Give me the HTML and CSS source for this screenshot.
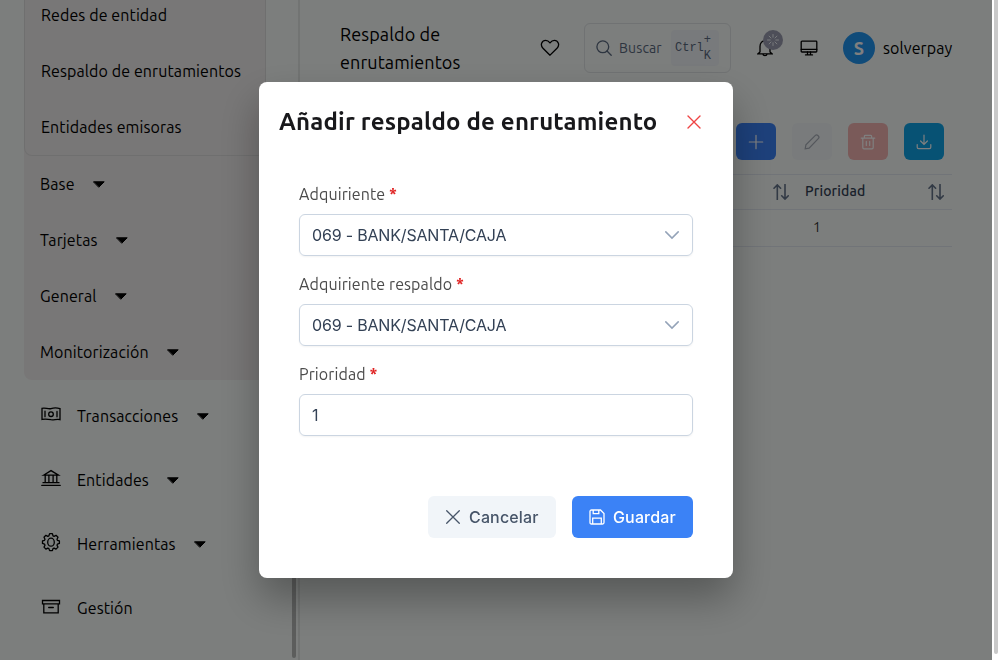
FILE: index.html
```html
<!DOCTYPE html>
<html lang="es">
<head>
<meta charset="utf-8">
<title>Respaldo de enrutamientos</title>
<link rel="stylesheet" href="styles.css">
</head>
<body>
<div class="app">
  <aside class="sidebar">
    <nav class="menu">
      <div class="group">
        <div class="submenu">
          <a class="item">Redes de entidad</a>
          <a class="item">Respaldo de enrutamientos</a>
          <a class="item">Entidades emisoras</a>
        </div>
        <a class="item">Base<svg class="caret" viewBox="0 0 12 7"><path d="M.8.8h10.400L6 6z"/></svg></a>
        <a class="item">Tarjetas<svg class="caret" viewBox="0 0 12 7"><path d="M.8.8h10.400L6 6z"/></svg></a>
        <a class="item">General<svg class="caret" viewBox="0 0 12 7"><path d="M.8.8h10.400L6 6z"/></svg></a>
        <a class="item">Monitorización<svg class="caret" viewBox="0 0 12 7"><path d="M.8.8h10.400L6 6z"/></svg></a>
      </div>
      <a class="item root">
        <svg class="menu-icon" viewBox="0 0 20 20"><path d="M1 4.300C4 3.200 7 5.400 10 4.600c3-.9 6-.8 9 0v11c-3-1-6 .6-9 .1-3-.6-6-.9-9-.3zM4 7.200v5.500M16 7.400v5.400"/><circle cx="10" cy="10.200" r="2.300"/></svg>
        <span>Transacciones</span><svg class="caret" viewBox="0 0 12 7"><path d="M.8.8h10.400L6 6z"/></svg></a>
      <a class="item root">
        <svg class="menu-icon" viewBox="0 0 20 20"><path d="M.8 17.400h18.400M2 14.700h16M2.500 7.200 10 2.600l7.500 4.600zM4.200 7.500v7M7.900 7.500v7M12.100 7.500v7M15.800 7.500v7"/></svg>
        <span>Entidades</span><svg class="caret" viewBox="0 0 12 7"><path d="M.8.8h10.400L6 6z"/></svg></a>
      <a class="item root">
        <svg class="menu-icon" viewBox="0 0 20 20"><path d="M8.600 1.700h2.800l.6 2.100 1.100.5 1.900-1 2 2-1 1.900.4 1.100 2 .6v2.500l-2 .7-.4 1.100 1 1.900-2 2-1.900-1-1.100.5-.6 2H8.600l-.7-2-1.100-.5-1.900 1-1.900-2 1-1.900-.5-1.100-2-.7V8.900l2-.6.5-1.100-1-1.900 1.900-2 1.900 1 1.100-.5z" stroke-linejoin="round"/><ellipse cx="10" cy="10.200" rx="3.300" ry="4"/></svg>
        <span>Herramientas</span><svg class="caret" viewBox="0 0 12 7"><path d="M.8.8h10.400L6 6z"/></svg></a>
      <a class="item root">
        <svg class="menu-icon" viewBox="0 0 20 20"><path d="M1.500 4.500h17v3.300h-17zM2.800 7.800v9h14.400v-9M7.700 11.500h4.600"/></svg>
        <span>Gestión</span></a>
    </nav>
    <div class="side-thumb"></div>
  </aside>

  <main class="main">
    <header class="topbar">
      <h1 class="page-title">Respaldo de<br>enrutamientos</h1>
      <svg class="heart" viewBox="0 0 20 18"><path d="M10 16.200 3 9.200C-.4 5.600 2.200 1.300 5.600 1.300 7.700 1.300 9 2.500 10 3.800c1-1.300 2.300-2.500 4.400-2.500 3.400 0 6 4.300 2.600 7.900z"/></svg>
      <div class="search">
        <svg class="search-icon" viewBox="0 0 16 16"><circle cx="6.800" cy="6.800" r="5.900"/><path d="m11 11 4.200 4.200"/></svg>
        <span class="search-text">Buscar</span>
        <kbd class="shortcut"><span>Ctrl</span><span class="combo">+<br>K</span></kbd>
      </div>
      <div class="bell-wrap">
        <svg class="bell" viewBox="0 0 16 18"><path d="M3 13V7.500C3 4 5 1.800 8 1.800s5 2.200 5 5.700V13l2 1.800H1zM6 15.200c.2 2 3.800 2 4 0"/></svg>
        <span class="badge"><svg viewBox="0 0 12 12"><path d="M6 .5v2.700M6 8.800v2.700M.5 6h2.700M8.800 6h2.700M2.100 2.100 4 4M8 8l1.900 1.900M2.100 9.900 4 8M8 4l1.900-1.900"/></svg></span>
      </div>
      <svg class="monitor" viewBox="0 0 18 16"><rect x="1.200" y="1.200" width="15.600" height="10.800" rx=".8"/><path d="M1.200 9.300h15.600M7.500 12v2.800M10.500 12v2.800M5.500 14.900h7"/></svg>
      <div class="avatar">S</div>
      <span class="user">solverpay</span>
    </header>
    <div class="toolbar">
      <button class="tool add"><svg viewBox="0 0 16 16"><path d="M8 1.300v13.400M1.300 8h13.400"/></svg></button>
      <button class="tool edit"><svg viewBox="0 0 16 16"><path d="m1.200 14.800.7-3.900 9.500-9.500c1.600-1.500 4.600 1.300 3.100 3l-9.400 9.700z"/></svg></button>
      <button class="tool remove"><svg viewBox="0 0 16 16"><path d="M1.200 4.100h13.600M4.400 4V2.200q0-.9.900-.9h5.400q.9 0 .9.900V4M2.800 4.300v9.200q0 1.300 1.200 1.300h8q1.200 0 1.200-1.300V4.300M6.300 7.400v4M9.700 7.400v4"/></svg></button>
      <button class="tool export"><svg viewBox="0 0 16 16"><path d="M8 1v9.200M4.600 7 8 10.400 11.400 7M1.200 10.500v2.800q0 1.400 1.400 1.400h10.800q1.400 0 1.400-1.400v-2.800"/></svg></button>
    </div>
    <div class="table">
      <div class="tr head">
        <div class="cell first"><svg class="sort" viewBox="0 0 16 16"><path d="M4.300 15.600V1M1 4.200 4.300.9l3.300 3.300M12 .4V15M8.700 11.800l3.300 3.300 3.300-3.300"/></svg></div>
        <div class="cell second"><span class="th">Prioridad</span><svg class="sort" viewBox="0 0 16 16"><path d="M4.300 15.600V1M1 4.200 4.300.9l3.300 3.300M12 .4V15M8.700 11.800l3.300 3.300 3.300-3.300"/></svg></div>
      </div>
      <div class="tr body"><div class="value">1</div></div>
    </div>
  </main>
</div>

<div class="mask">
  <section class="dialog" role="dialog">
    <header class="dialog-head">
      <h2 class="dialog-title">Añadir respaldo de enrutamiento</h2>
      <svg class="close" viewBox="0 0 14 14"><path d="m1 1 12 12M13 1 1 13"/></svg>
    </header>
    <form class="form">
      <div class="field">
        <label class="label">Adquiriente <b>*</b></label>
        <div class="control"><span>069 - BANK/SANTA/CAJA</span><svg class="chevron" viewBox="0 0 14 14"><path d="M.8 3.900 7 10.100l6.200-6.200"/></svg></div>
      </div>
      <div class="field">
        <label class="label">Adquiriente respaldo <b>*</b></label>
        <div class="control"><span>069 - BANK/SANTA/CAJA</span><svg class="chevron" viewBox="0 0 14 14"><path d="M.8 3.900 7 10.100l6.200-6.200"/></svg></div>
      </div>
      <div class="field">
        <label class="label">Prioridad <b>*</b></label>
        <div class="control"><span>1</span></div>
      </div>
    </form>
    <footer class="actions">
      <button class="btn cancel"><svg viewBox="0 0 16 16"><path d="m1.700 1.700 12.600 12.600M14.300 1.700 1.700 14.300"/></svg>Cancelar</button>
      <button class="btn save"><svg viewBox="0 0 16 16"><path d="M2.500 1h9L15 4.500v9q0 1.500-1.500 1.500h-11Q1 15 1 13.500v-11Q1 1 2.500 1zM4.200 1v3.600h5.600V1M3.700 15V9.200h8.600V15"/></svg>Guardar</button>
    </footer>
  </section>
</div>
<div class="scrollbar"><div class="scroll-thumb"></div></div>
</body>
</html>
```
FILE: styles.css
```css
* { box-sizing: border-box; }
body {
  margin: 0;
  width: 1000px;
  height: 660px;
  overflow: hidden;
  background: #fff;
  color: #000;
  font: 16px/24px Ubuntu, "Noto Sans", sans-serif;
  letter-spacing: .1px;
}
svg { display: block; fill: none; stroke: currentColor; stroke-width: 1.3; flex: none; stroke-linecap: round; }
button { border: 0; padding: 0; font: inherit; }

.app { display: flex; width: 992px; height: 660px; background: #f8fcfa; }
.sidebar { display: flex; width: 300px; border-right: 2px solid #e4e8e6; flex: none; }
.menu { width: 268px; padding-left: 24px; flex: none; }
.group { width: 242px; height: 380px; background: #f1eeee; border-radius: 0 0 8px 8px; margin-bottom: 4px; }
.submenu { height: 156px; border: 1px solid #dfdfdf; border-top: 0; border-radius: 0 0 8px 8px; overflow: hidden; }
.item { display: flex; align-items: center; height: 56px; padding-left: 16px; white-space: nowrap; }
.submenu .item:first-child { height: 43px; padding-bottom: 13px; }
.caret { width: 12px; height: 7px; margin-left: 18.4px; fill: #000; stroke-linejoin: round; stroke-width: 1; }
.root { height: 64px; }
.menu-icon { width: 20px; height: 20px; margin: -4px 16.5px 0 .5px; }
.side-thumb { align-self: flex-end; width: 4px; height: 420px; margin: 0 0 2px 24px; border-radius: 2px; background: #b8bab9; }

.main { width: 692px; padding: 20px 40px 0; }
.topbar { display: flex; align-items: center; height: 56px; }
.page-title { margin: 0; width: 200px; font-weight: 400; font-size: 18px; line-height: 28px; flex: none; }
.heart { width: 20px; height: 18px; }
.search { display: flex; align-items: center; width: 147px; height: 50px; margin-left: 24px; padding-left: 11px; border: 1px solid #e0e4e6; border-radius: 6px; color: #5b6a80; font-size: 14px; flex: none; }
.search-icon { width: 16px; height: 16px; }
.search-text { width: 52px; margin-left: 7px; letter-spacing: .15px; flex: none; }
.shortcut { display: flex; align-items: center; width: 48px; height: 36px; padding-left: 4px; border-radius: 4px; background: #f1f5f9; font: 12px/16px "Liberation Mono", monospace; letter-spacing: 0; }
.bell-wrap { position: relative; width: 16px; height: 18px; margin-left: 26px; flex: none; }
.bell { width: 16px; height: 18px; }
.badge { position: absolute; left: 6px; top: -9px; display: grid; place-items: center; width: 20px; height: 20px; border-radius: 50%; background: #9a9db0; color: #f1f5f9; }
.badge svg { width: 12px; height: 12px; stroke-width: 1; }
.monitor { width: 18px; height: 16px; margin-left: 27px; }
.avatar { display: grid; place-items: center; width: 32px; height: 32px; margin-left: 25px; border-radius: 50%; background: #2196f3; color: #fff; font-size: 18px; font-weight: 700; flex: none; }
.user { margin-left: 8px; }

.toolbar { display: flex; justify-content: flex-end; gap: 16px; margin: 47px 8px 0 0; }
.tool { display: grid; place-items: center; width: 40px; height: 37px; border-radius: 6px; color: #fff; }
.tool svg { width: 16px; height: 16px; stroke-width: 1.2; }
.add { background: #3b82f6; }
.edit { background: #f2f6f8; color: #a8aeb8; }
.remove { background: #f4b4b3; }
.export { background: #0ea5e9; }
.table { margin-top: 14px; }
.tr { display: flex; border-bottom: 1px solid #e2e8f0; }
.head { height: 36px; border-top: 1px solid #e2e8f0; align-items: center; color: #334155; font-size: 14px; font-weight: 500; }
.cell { display: flex; align-items: center; flex: none; }
.first { width: 449px; justify-content: flex-end; }
.second { width: 139px; margin-left: 16px; justify-content: space-between; }
.th { padding-bottom: 2px; letter-spacing: .15px; }
.sort { width: 16px; height: 16px; color: #64748b; stroke-width: 1.6; }
.body { height: 37px; padding-bottom: 2px; align-items: center; font-size: 14px; color: #333; }
.value { margin-left: 473px; }

.mask { position: fixed; inset: 0 8px 0 0; display: flex; justify-content: center; align-items: center; background: rgba(0, 0, 0, .5); }
.dialog { width: 474px; height: 496px; border-radius: 8px; background: #fff; box-shadow: 0 20px 40px rgba(0, 0, 0, .3); }
.dialog-head { display: flex; align-items: center; justify-content: space-between; height: 78px; padding: 2px 32.5px 0 20px; }
.dialog-title { margin: 0; font-size: 24px; line-height: 32px; font-weight: 700; letter-spacing: .18px; color: #18181b; white-space: nowrap; }
.close { width: 14px; height: 14px; color: #ef4444; stroke-width: 1.4; }
.form { padding: 22px 40px 0; }
.field { height: 90px; }
.label { display: block; height: 32px; color: #4b4b4b; }
.label b { color: #e02424; }
.control { display: flex; align-items: center; justify-content: space-between; height: 42px; padding: 0 13px 0 12px; border: 1px solid #cbd5e1; border-radius: 6px; color: #334155; font: 16px/24px Inter, sans-serif; letter-spacing: -.18px; box-shadow: 0 1px 2px rgba(18, 18, 23, .05); }
.chevron { width: 14px; height: 14px; color: #94a3b8; stroke-width: 1.5; }
.actions { display: flex; justify-content: flex-end; gap: 16px; padding: 44px 40px 0; }
.btn { display: flex; align-items: center; gap: 8px; height: 42px; padding: 0 17px; border-radius: 6px; font: 500 16px/24px Inter, sans-serif; letter-spacing: .15px; white-space: nowrap; }
.btn svg { width: 16px; height: 16px; }
.cancel { width: 128px; background: #f1f5f9; color: #475569; }
.save { width: 121px; background: #3b82f6; color: #fff; }

.scrollbar { position: fixed; top: 0; right: 0; width: 8px; height: 660px; padding: 0 2px; background: #fff; }
.scroll-thumb { height: 654px; border-radius: 0 0 2px 2px; background: #c9c9c9; }
```
